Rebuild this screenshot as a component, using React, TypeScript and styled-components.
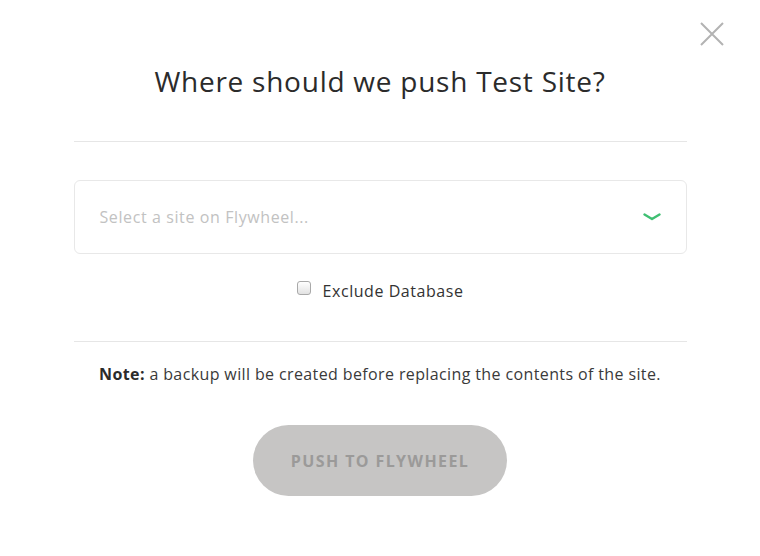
import styled, { createGlobalStyle } from 'styled-components';

const GlobalStyle = createGlobalStyle`
  html, body {
    margin: 0;
    background: #ffffff;
    font-family: "Open Sans", Lato, sans-serif;
    color: #333333;
  }
`;

const ChevronDown = () => (
  <svg width="18" height="8" viewBox="0 0 18 8" fill="none">
    <path d="M1.5 1.5 L9 6 L16.5 1.5" stroke="#3fbf72" strokeWidth="2.4" strokeLinecap="round" strokeLinejoin="round" />
  </svg>
);

const CloseIcon = () => (
  <svg width="26" height="26" viewBox="0 0 26 26" fill="none">
    <path d="M2 2 L24 24 M24 2 L2 24" stroke="#b3b3b3" strokeWidth="2" />
  </svg>
);

const App = () => {
  return (
    <>
      <GlobalStyle />
      <S.Page>
        <S.Close aria-label="Close">
          <CloseIcon />
        </S.Close>

        <S.Title>Where should we push Test Site?</S.Title>
        <S.Divider $gap={43} />

        <S.Select>
          <span>Select a site on Flywheel...</span>
          <ChevronDown />
        </S.Select>

        <S.CheckRow>
          <input type="checkbox" />
          <span>Exclude Database</span>
        </S.CheckRow>

        <S.Divider $gap={38} />

        <S.Note>
          <b>Note:</b> a backup will be created before replacing the contents of the site.
        </S.Note>

        <S.PushButton disabled>PUSH TO FLYWHEEL</S.PushButton>
      </S.Page>
    </>
  );
};

export default App;

const S = {
  Page: styled.div`
    position: relative;
    width: 613px;
    margin: 0 auto;
    padding-top: 64px;
    display: flex;
    flex-direction: column;
    align-items: center;
    letter-spacing: 0.45px;
  `,

  Close: styled.button`
    position: absolute;
    top: 21px;
    right: -38px;
    padding: 0;
    border: none;
    background: none;
    cursor: pointer;
    line-height: 0;
  `,

  Title: styled.h1`
    margin: 0;
    font-size: 28px;
    line-height: 34px;
    font-weight: 400;
    letter-spacing: 0.75px;
    color: #2b2b2b;
  `,

  Divider: styled.hr<{ $gap: number }>`
    align-self: stretch;
    margin: ${({ $gap }) => $gap}px 0 0;
    border: none;
    border-top: 1px solid #e6e6e6;
  `,

  Select: styled.div`
    align-self: stretch;
    box-sizing: border-box;
    height: 74px;
    margin-top: 38px;
    padding: 0 25px;
    display: flex;
    align-items: center;
    justify-content: space-between;
    border: 1px solid #e8e8e8;
    border-radius: 6px;
    font-size: 16px;
    letter-spacing: 0.6px;
    color: #c2c2c2;
  `,

  CheckRow: styled.label`
    margin-top: 25px;
    height: 24px;
    display: flex;
    align-items: center;
    gap: 12px;
    font-size: 16px;
    letter-spacing: 0.55px;
    color: #333333;

    input {
      appearance: none;
      margin: 0;
      width: 14px;
      height: 14px;
      position: relative;
      top: -3px;
      border: 1px solid #a9a9a9;
      border-radius: 3px;
      background: linear-gradient(#ffffff, #e2e2e2);
      box-sizing: border-box;
    }
  `,

  Note: styled.p`
    margin: 20px 0 0;
    font-size: 16px;
    line-height: 24px;
    letter-spacing: 0.38px;
    color: #3a3a3a;

    b {
      font-weight: 700;
      color: #2b2b2b;
    }
  `,

  PushButton: styled.button`
    margin-top: 39px;
    width: 254px;
    height: 71px;
    border: none;
    border-radius: 36px;
    background: #c6c5c4;
    font-family: inherit;
    font-size: 16px;
    font-weight: 700;
    letter-spacing: 1.4px;
    color: #9b9a99;
  `,
};
